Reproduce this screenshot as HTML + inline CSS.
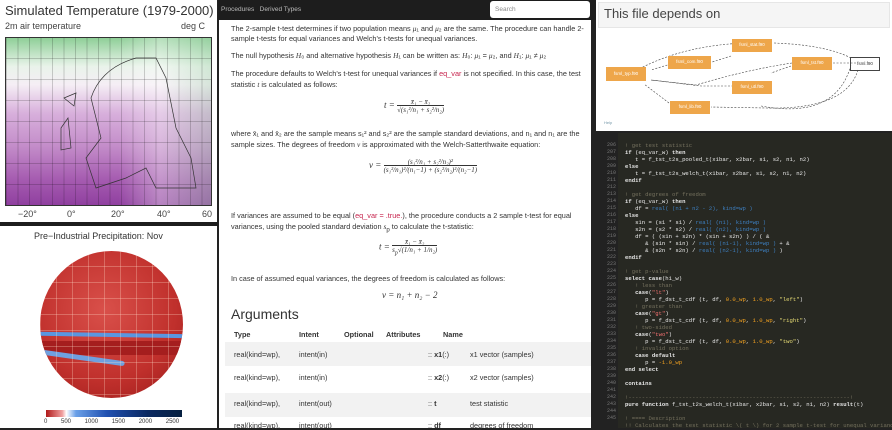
<!DOCTYPE html>
<html><head><meta charset="utf-8"><style>
*{margin:0;padding:0;box-sizing:border-box}
body{width:892px;height:428px;overflow:hidden;background:#222;font-family:"Liberation Sans",sans-serif;position:relative}
.a{position:absolute;white-space:nowrap}
#left{position:absolute;left:0;top:0;width:217px;height:428px;background:#fff}
#mid{position:absolute;left:219px;top:0;width:372px;height:428px;background:#fff}
#nav{position:absolute;left:218px;top:0;width:378px;height:20px;background:#1d1d1d}
.t{font-size:7.3px;color:#333;position:absolute;left:12px;white-space:nowrap}
.m{font-family:"Liberation Serif",serif;font-style:italic}
#code{position:absolute;left:596px;top:133px;width:296px;height:295px;background:#272822;font-family:"Liberation Mono",monospace;font-size:5.6px;color:#e8e8e8}
.ln{position:absolute;left:0;width:20px;text-align:right;color:#777;font-size:5px}
.cl{position:absolute;left:29px;white-space:pre}
.c{color:#75715e}.k{font-weight:bold}.b{color:#3d7fc0}.o{color:#f0a020}.s{color:#e6db74}.r{color:#f07070}
.nd{position:absolute;background:#eea64a;color:#fff;font-size:4.5px;text-align:center;line-height:12px;height:13px}
</style></head><body>
<div id="left">
<div class="a" style="left:5px;top:3px;font-size:13px;color:#333">Simulated Temperature (1979-2000)</div>
<div class="a" style="left:5px;top:21px;font-size:9px;color:#444">2m air temperature</div>
<div class="a" style="left:181px;top:21px;font-size:9px;color:#444">deg C</div>
<div class="a" style="left:5px;top:37px;width:207px;height:169px;border:1px solid #333;background:linear-gradient(180deg,#8fcf98 0%,#e9f3ea 17%,#f5eef5 28%,#d8b0dc 45%,#c38cc9 65%,#a55bb0 85%,#9040a0 100%)">
<div style="position:absolute;inset:0;background:linear-gradient(90deg,rgba(255,255,255,0) 0%,rgba(255,255,255,0) 55%,rgba(255,255,255,.35) 75%,rgba(160,210,170,.35) 100%)"></div>
<div style="position:absolute;inset:0;background-image:linear-gradient(90deg,rgba(0,0,0,.18) 1px,transparent 1px),linear-gradient(0deg,rgba(0,0,0,.18) 1px,transparent 1px);background-size:11.5px 100%,100% 21px"></div>
<svg style="position:absolute;left:0;top:0" width="207" height="169"><path d="M85 60 Q95 30 130 20 L150 20 L160 40 L170 90 L185 120 L190 150 L150 150 L140 130 L120 140 L90 150 L80 120 L95 100 Z M58 60 L70 55 L68 68 Z M55 90 L62 80 L65 110 L55 112 Z" fill="none" stroke="#333" stroke-width=".7"/></svg>
</div>
<div class="a" style="left:18px;top:209px;font-size:9px;color:#444">−20°</div>
<div class="a" style="left:67px;top:209px;font-size:9px;color:#444">0°</div>
<div class="a" style="left:111px;top:209px;font-size:9px;color:#444">20°</div>
<div class="a" style="left:157px;top:209px;font-size:9px;color:#444">40°</div>
<div class="a" style="left:202px;top:209px;font-size:9px;color:#444">60</div>
<div class="a" style="left:0;top:222px;width:218px;height:4px;background:#1d1d1d"></div>
<div class="a" style="left:34px;top:231px;font-size:9px;color:#333">Pre−Industrial Precipitation: Nov</div>
<div class="a" style="left:40px;top:251px;width:143px;height:147px;border-radius:50%;overflow:hidden;background:radial-gradient(circle at 45% 40%,#d9504a,#c0302c 60%,#9a1a1a)">
<div style="position:absolute;left:-10px;top:82px;width:170px;height:4px;background:#5a96e0;border-radius:4px;transform:rotate(1deg)"></div>
<div style="position:absolute;left:0;top:90px;width:160px;height:14px;background:#a51e1e"></div>
<div style="position:absolute;left:-5px;top:104px;width:90px;height:5px;background:#6fa0e0;border-radius:5px;transform:rotate(8deg)"></div>
<div style="position:absolute;inset:0;background-image:linear-gradient(90deg,rgba(255,220,200,.3) 1px,transparent 1px),linear-gradient(0deg,rgba(255,220,200,.3) 1px,transparent 1px);background-size:16px 100%,100% 16px"></div>
</div>
<div class="a" style="left:46px;top:410px;width:136px;height:7px;background:linear-gradient(90deg,#b01a1a,#f0a0a0 12%,#fff 15%,#6aa0e8 22%,#2050b0 45%,#0a2860 75%,#062040)"></div>
<div class="a" style="left:44px;top:419px;font-size:6px;color:#333;word-spacing:12px">0 500 1000 1500 2000 2500</div>
</div>

<div id="mid">
<div class="t" style="top:24px">The 2-sample t-test determines if two population means <span class="m">μ</span>₁ and <span class="m">μ</span>₂ are the same. The procedure can handle 2-</div>
<div class="t" style="top:34px">sample t-tests for equal variances and Welch's t-tests for unequal variances.</div>
<div class="t" style="top:51px">The null hypothesis <span class="m">H</span>₀ and alternative hypothesis <span class="m">H</span>₁ can be written as: <span class="m">H</span>₀: <span class="m">μ</span>₁ = <span class="m">μ</span>₂, and <span class="m">H</span>₁: <span class="m">μ</span>₁ ≠ <span class="m">μ</span>₂</div>
<div class="t" style="top:69px">The procedure defaults to Welch's t-test for unequal variances if <span style="color:#c7254e">eq_var</span> is not specified. In this case, the test</div>
<div class="t" style="top:80px">statistic <span class="m">t</span> is calculated as follows:</div>
<div class="t m" style="top:98px;left:165px;font-size:9px">t = <span style="display:inline-block;text-align:center;vertical-align:middle;font-size:7px">x̄₁ − x̄₂<br><span style="border-top:1px solid #333">√(s₁²/n₁ + s₂²/n₂)</span></span></div>
<div class="t" style="top:129px">where x̄₁ and x̄₂ are the sample means s₁² and s₂² are the sample standard deviations, and n₁ and n₁ are the</div>
<div class="t" style="top:140px">sample sizes. The degrees of freedom <span class="m">ν</span> is approximated with the Welch-Satterthwaite equation:</div>
<div class="t m" style="top:158px;left:150px;font-size:9px">ν = <span style="display:inline-block;text-align:center;vertical-align:middle;font-size:7px">(s₁²/n₁ + s₂²/n₂)²<br><span style="border-top:1px solid #333">(s₁²/n₁)²/(n₁−1) + (s₂²/n₂)²/(n₂−1)</span></span></div>
<div class="t" style="top:211px">If variances are assumed to be equal (<span style="color:#c7254e">eq_var = .true.</span>), the procedure conducts a 2 sample t-test for equal</div>
<div class="t" style="top:222px">variances, using the pooled standard deviation <span class="m">s</span><sub>p</sub> to calculate the t-statistic:</div>
<div class="t m" style="top:238px;left:160px;font-size:9px">t = <span style="display:inline-block;text-align:center;vertical-align:middle;font-size:7px">x̄₁ − x̄₂<br><span style="border-top:1px solid #333">s<sub>p</sub>√(1/n₁ + 1/n₂)</span></span></div>
<div class="t" style="top:274px">In case of assumed equal variances, the degrees of freedom is calculated as follows:</div>
<div class="t m" style="top:290px;left:163px;font-size:9px">ν = n₁ + n₂ − 2</div>
<div class="t" style="top:306px;font-size:14px;color:#333;left:12px">Arguments</div>
<div class="t" style="top:330px;font-weight:bold;left:15px">Type</div>
<div class="t" style="top:330px;font-weight:bold;left:80px">Intent</div>
<div class="t" style="top:330px;font-weight:bold;left:125px">Optional</div>
<div class="t" style="top:330px;font-weight:bold;left:167px">Attributes</div>
<div class="t" style="top:330px;font-weight:bold;left:224px">Name</div>
<div class="a" style="left:6px;top:342px;width:366px;height:24px;background:#f2f2f2"></div>
<div class="a" style="left:6px;top:393px;width:366px;height:24px;background:#f2f2f2"></div>
<div class="t" style="top:350px;left:15px">real(kind=wp),</div><div class="t" style="top:350px;left:80px">intent(in)</div><div class="t" style="top:350px;left:209px">:: <b>x1</b>(:)</div><div class="t" style="top:350px;left:251px">x1 vector (samples)</div>
<div class="t" style="top:373px;left:15px">real(kind=wp),</div><div class="t" style="top:373px;left:80px">intent(in)</div><div class="t" style="top:373px;left:209px">:: <b>x2</b>(:)</div><div class="t" style="top:373px;left:251px">x2 vector (samples)</div>
<div class="t" style="top:399px;left:15px">real(kind=wp),</div><div class="t" style="top:399px;left:80px">intent(out)</div><div class="t" style="top:399px;left:209px">:: <b>t</b></div><div class="t" style="top:399px;left:251px">test statistic</div>
<div class="t" style="top:421px;left:15px">real(kind=wp),</div><div class="t" style="top:421px;left:80px">intent(out)</div><div class="t" style="top:421px;left:209px">:: <b>df</b></div><div class="t" style="top:421px;left:251px">degrees of freedom</div>
</div>
<div id="nav">
<div class="a" style="left:3px;top:6px;font-size:6.5px;color:#bbb">Procedures&nbsp;&nbsp; Derived Types</div>
<div class="a" style="left:272px;top:1px;width:100px;height:17px;background:#fff;border-radius:3px;font-size:6.5px;color:#888;padding:5px 5px">Search</div>
</div>

<div class="a" style="left:596px;top:0;width:296px;height:131px;background:#fff">
<div class="a" style="left:2px;top:2px;width:292px;height:26px;background:#f5f5f5;border:1px solid #e6e6e6"></div>
<div class="a" style="left:8px;top:6px;font-size:13px;color:#444">This file depends on</div>
<svg class="a" style="left:0;top:0" width="296" height="131" fill="none" stroke="#444" stroke-width=".6" stroke-dasharray="2,1.5">
<path d="M260 63 L235 63 M255 58 Q230 45 178 43 M262 70 Q250 110 170 108 L115 107 M196 63 Q150 70 100 85 L55 80 M195 66 L175 73 M150 43 Q90 45 45 68 M135 56 L110 64 M78 63 L55 70 M155 86 L105 86 L55 80 M73 103 L48 84 M165 106 Q240 120 255 65"/>
</svg>
<div class="nd" style="left:136px;top:39px;width:40px">fsml_stat.f90</div>
<div class="nd" style="left:72px;top:56px;width:43px">fsml_com.f90</div>
<div class="nd" style="left:196px;top:57px;width:40px">fsml_tst.f90</div>
<div class="nd" style="left:10px;top:67px;width:40px;height:14px;line-height:14px">fsml_typ.f90</div>
<div class="nd" style="left:136px;top:81px;width:40px">fsml_utl.f90</div>
<div class="nd" style="left:74px;top:101px;width:40px">fsml_lib.f90</div>
<div class="a" style="left:254px;top:57px;width:30px;height:14px;border:1px solid #444;font-size:4.5px;text-align:center;line-height:12px;color:#333">fsml.f90</div>
<div class="a" style="left:8px;top:120px;font-size:4px;color:#79a">Help</div>
</div>

<div id="code">
<div style="position:absolute;left:0;top:0;width:22px;height:295px;background:#222"></div>
<div class="ln" style="top:9px;line-height:7px;white-space:pre">206
207
208
209
210
211
212
213
214
215
216
217
218
219
220
221
222
223
224
225
226
227
228
229
230
231
232
233
234
235
236
237
238
239
240
241
242
243
244
245</div>
<div class="cl" style="top:9px;line-height:7px"><span class="c">! get test statistic</span>
<span class="k">if</span> (eq_var_w) <span class="k">then</span>
   t = f_tst_t2s_pooled_t(x1bar, x2bar, s1, s2, n1, n2)
<span class="k">else</span>
   t = f_tst_t2s_welch_t(x1bar, x2bar, s1, s2, n1, n2)
<span class="k">endif</span>

<span class="c">! get degrees of freedom</span>
<span class="k">if</span> (eq_var_w) <span class="k">then</span>
   df = <span class="b">real( (n1 + n2 - 2), kind=wp )</span>
<span class="k">else</span>
   s1n = (s1 * s1) / <span class="b">real( (n1), kind=wp )</span>
   s2n = (s2 * s2) / <span class="b">real( (n2), kind=wp )</span>
   df = ( (s1n + s2n) * (s1n + s2n) ) / ( &amp;
      &amp; (s1n * s1n) / <span class="b">real( (n1-1), kind=wp )</span> + &amp;
      &amp; (s2n * s2n) / <span class="b">real( (n2-1), kind=wp )</span> )
<span class="k">endif</span>

<span class="c">! get p-value</span>
<span class="k">select case</span>(h1_w)
   <span class="c">! less than</span>
   <span class="k">case</span>(<span class="r">"lt"</span>)
      p = f_dst_t_cdf (t, df, <span class="o">0.0_wp</span>, <span class="o">1.0_wp</span>, <span class="s">"left"</span>)
   <span class="c">! greater than</span>
   <span class="k">case</span>(<span class="r">"gt"</span>)
      p = f_dst_t_cdf (t, df, <span class="o">0.0_wp</span>, <span class="o">1.0_wp</span>, <span class="s">"right"</span>)
   <span class="c">! two-sided</span>
   <span class="k">case</span>(<span class="r">"two"</span>)
      p = f_dst_t_cdf (t, df, <span class="o">0.0_wp</span>, <span class="o">1.0_wp</span>, <span class="s">"two"</span>)
   <span class="c">! invalid option</span>
   <span class="k">case default</span>
      p = <span class="o">-1.0_wp</span>
<span class="k">end select</span>

<span class="k">contains</span>

<span class="c">!------------------------------------------------------------------!</span>
<span class="k">pure function</span> f_tst_t2s_welch_t(x1bar, x2bar, s1, s2, n1, n2) <span class="k">result</span>(t)

<span class="c">! ==== Description</span>
<span class="c">!! Calculates the test statistic \( t \) for 2 sample t-test for unequal variances</span></div>
</div>
</body></html>
